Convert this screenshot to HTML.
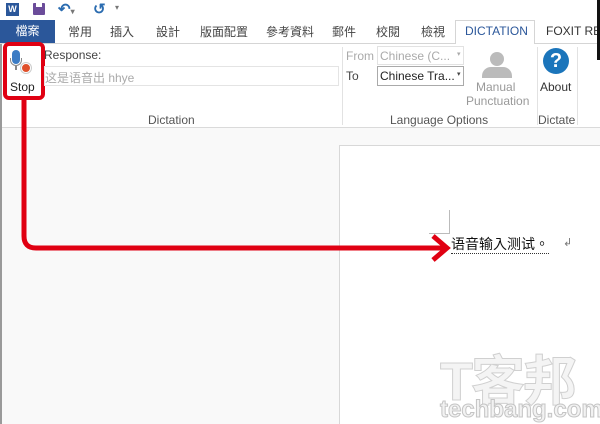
<!DOCTYPE html>
<html><head><meta charset="utf-8"><style>
*{margin:0;padding:0;box-sizing:border-box}
body{width:600px;height:424px;overflow:hidden;background:#f9f9f9;font-family:"Liberation Sans","Noto Sans CJK TC",sans-serif;position:relative;color:#444}
.a{position:absolute}
.t{font-size:12px;white-space:nowrap}
</style></head><body>
<div class="a" style="left:0;top:0;width:600px;height:43px;background:#fff"></div>
<div class="a" style="left:6px;top:3px;width:13px;height:13px;background:#2b579a;color:#fff;font-size:9px;font-weight:bold;line-height:13px;text-align:center">W</div>
<div class="a" style="left:33px;top:3px;width:12px;height:12px;background:#6b4c9a;border-radius:1px"></div>
<div class="a" style="left:36px;top:3px;width:6px;height:4px;background:#fff"></div>
<div class="a t" style="left:58px;top:0px;color:#2b6cb0;font-size:15px;font-weight:bold">↶<span style="font-size:8px;color:#777">▾</span></div>
<div class="a t" style="left:93px;top:0px;color:#2b6cb0;font-size:15px;font-weight:bold">↺</div>
<div class="a t" style="left:115px;top:3px;color:#777;font-size:8px">▾</div>
<div class="a t" style="left:0;top:20px;width:55px;height:23px;background:#2b579a;color:#fff;text-align:center;line-height:22px">檔案</div>
<div class="a t" style="left:68px;top:23px">常用</div>
<div class="a t" style="left:110px;top:23px">插入</div>
<div class="a t" style="left:156px;top:23px">設計</div>
<div class="a t" style="left:200px;top:23px">版面配置</div>
<div class="a t" style="left:266px;top:23px">參考資料</div>
<div class="a t" style="left:332px;top:23px">郵件</div>
<div class="a t" style="left:376px;top:23px">校閱</div>
<div class="a t" style="left:421px;top:23px">檢視</div>
<div class="a" style="left:455px;top:20px;width:80px;height:24px;background:#fff;border:1px solid #d5d5d5;border-bottom:none"></div>
<div class="a t" style="left:465px;top:24px;color:#2b579a">DICTATION</div>
<div class="a t" style="left:546px;top:24px;color:#333">FOXIT REA</div>
<div class="a" style="left:0;top:43px;width:455px;height:1px;background:#d5d5d5"></div>
<div class="a" style="left:535px;top:43px;width:65px;height:1px;background:#d5d5d5"></div>
<div class="a" style="left:0;top:44px;width:600px;height:84px;background:#fff;border-bottom:1px solid #dadada"></div>
<div class="a" style="left:0;top:44px;width:2px;height:380px;background:#9a9a9a"></div>
<div class="a" style="left:597px;top:0;width:3px;height:60px;background:#111"></div>
<div class="a" style="left:12px;top:50px;width:8px;height:14px;background:#3c7cc4;border-radius:4px"></div>
<div class="a" style="left:10px;top:58px;width:12px;height:8px;border:1.5px solid #888;border-top:none;border-radius:0 0 6px 6px"></div>
<div class="a" style="left:15px;top:66px;width:2px;height:4px;background:#888"></div>
<div class="a" style="left:21px;top:63px;width:10px;height:10px;background:#e0502a;border-radius:50%;border:1.5px solid #fff;box-shadow:0 0 0 1px #ccc"></div>
<div class="a t" style="left:10px;top:80px;color:#222">Stop</div>
<div class="a" style="left:3px;top:42px;width:42px;height:58px;border:4px solid #e00012;border-radius:6px"></div>
<div class="a t" style="left:44px;top:48px;color:#444">Response:</div>
<div class="a" style="left:44px;top:66px;width:295px;height:20px;border:1px solid #e4e4e4"></div>
<div class="a t" style="left:45px;top:69px;color:#aaa">这是语音出 hhye</div>
<div class="a t" style="left:148px;top:113px;color:#555">Dictation</div>
<div class="a" style="left:342px;top:47px;width:1px;height:78px;background:#e2e2e2"></div>
<div class="a t" style="left:346px;top:49px;color:#aaa">From</div>
<div class="a" style="left:377px;top:46px;width:87px;height:19px;border:1px solid #e2e2e2"></div>
<div class="a t" style="left:380px;top:49px;color:#aaa">Chinese (C...</div>
<div class="a t" style="left:457px;top:50px;color:#aaa;font-size:7px">▾</div>
<div class="a t" style="left:346px;top:69px">To</div>
<div class="a" style="left:377px;top:66px;width:87px;height:20px;border:1px solid #aaa"></div>
<div class="a t" style="left:380px;top:69px;color:#222">Chinese Tra...</div>
<div class="a t" style="left:457px;top:70px;color:#444;font-size:7px">▾</div>
<div class="a" style="left:490px;top:52px;width:14px;height:14px;background:#bbb;border-radius:50%"></div>
<div class="a" style="left:482px;top:67px;width:30px;height:11px;background:#bbb;border-radius:9px 9px 0 0"></div>
<div class="a t" style="left:476px;top:80px;color:#999">Manual</div>
<div class="a t" style="left:466px;top:94px;color:#999">Punctuation</div>
<div class="a t" style="left:390px;top:113px;color:#555">Language Options</div>
<div class="a" style="left:537px;top:47px;width:1px;height:78px;background:#e2e2e2"></div>
<div class="a" style="left:543px;top:48px;width:26px;height:26px;background:#1b75bb;border-radius:50%;color:#fff;font-weight:bold;font-size:20px;line-height:26px;text-align:center">?</div>
<div class="a t" style="left:540px;top:80px;color:#333">About</div>
<div class="a t" style="left:538px;top:113px;color:#555">Dictate</div>
<div class="a" style="left:577px;top:47px;width:1px;height:78px;background:#e2e2e2"></div>
<div class="a" style="left:339px;top:145px;width:261px;height:279px;background:#fff;border-left:1px solid #d8d8d8;border-top:1px solid #d8d8d8"></div>
<div class="a" style="left:429px;top:210px;width:21px;height:24px;border-right:1px solid #bbb;border-bottom:1px solid #bbb"></div>
<div class="a t" style="left:451px;top:236px;color:#111;font-size:14px;border-bottom:1px dotted #333;line-height:17px">语音输入测试。</div>
<div class="a t" style="left:563px;top:236px;color:#777;font-size:11px">↲</div>
<svg class="a" style="left:0;top:0" width="600" height="424">
<path d="M24 100 V236 Q24 248 36 248 H444" fill="none" stroke="#e00012" stroke-width="5"/>
<path d="M433 236 L447 248 L433 260" fill="none" stroke="#e00012" stroke-width="5"/>
</svg>
<div class="a" style="left:440px;top:355px;font-size:54px;color:#f4f4f4;font-weight:bold;-webkit-text-stroke:1px #d0d0d0;letter-spacing:-2px;line-height:54px">T客邦</div>
<div class="a" style="left:440px;top:398px;font-size:24px;color:#f2f2f2;font-weight:bold;-webkit-text-stroke:1px #c4c4c4;line-height:24px">techbang.com</div>
</body></html>
